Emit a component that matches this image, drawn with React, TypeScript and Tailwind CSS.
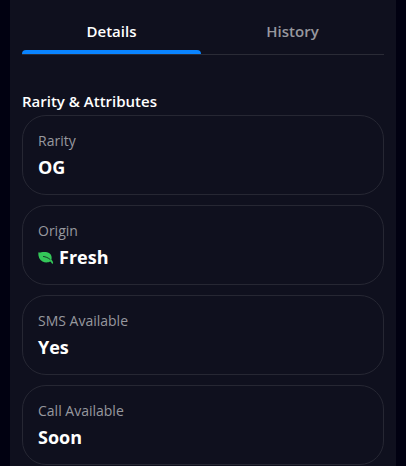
import React, { useState } from 'react';
import clsx from 'clsx';

type Attribute = {
  label: string;
  value: string;
  icon?: React.ReactNode;
}

const LeafIcon = () => (
  <svg viewBox="0 0 16 16" className="size-4 shrink-0" aria-hidden="true">
    <path
      d="M.3 3.200C.8 3.600 2 3.500 3.400 3.200c2.600-.5 6-.5 8.300 1.300 2 1.600 2.300 4.100 1.700 6.200.8.700 1.500 1.700 1.700 3 .1 1-1 1.300-1.400.5-.3-.8-.8-1.200-1.400-1.700-1.700 1-5.200 1.400-7.800 0C1.500 10.900 0 7.500.3 3.200Z"
      fill="#34c759"
    />
    <path d="M5.500 7.500c2.200.3 4.300 1.100 6.500 2.800" fill="none" stroke="#0f101e" strokeWidth="0.8" strokeLinecap="round" />
  </svg>
);

const tabs = ['Details', 'History'];

const attributes: Attribute[] = [
  { label: 'Rarity', value: 'OG' },
  { label: 'Origin', value: 'Fresh', icon: <LeafIcon /> },
  { label: 'SMS Available', value: 'Yes' },
  { label: 'Call Available', value: 'Soon' },
];

const AttributeCard: React.FC<Attribute> = ({ label, value, icon }) => (
  <div className="rounded-3xl border border-[#262733] p-[15px]">
    <dt className="text-sm leading-5 text-[#97989e]">{label}</dt>
    <dd className="mt-1 flex items-center gap-[5px] text-lg leading-6 font-bold text-white">
      {icon}
      {value}
    </dd>
  </div>
);

export default function App() {
  const [activeTab, setActiveTab] = useState('Details');

  return (
    <div className="min-h-screen bg-[#010111] px-[10px] font-['Open_Sans','Noto_Sans',sans-serif]">
      <main className="min-h-screen bg-[#0f101e] px-3">
        <div role="tablist" className="flex border-b border-[#2a2b36] pt-3">
          {tabs.map((tab) => (
            <button
              key={tab}
              type="button"
              role="tab"
              aria-selected={activeTab === tab}
              onClick={() => setActiveTab(tab)}
              className={clsx(
                'relative h-[42px] flex-1 pr-0.5 pb-1 text-[15px] leading-5 font-semibold',
                activeTab === tab ? 'text-white' : 'text-[#97989e]'
              )}
            >
              {tab}
              {activeTab === tab && (
                <span className="absolute right-0.5 bottom-0 left-0 h-1 rounded-t-sm bg-[#0a84ff]" />
              )}
            </button>
          ))}
        </div>

        {/* Attributes list */}
        <section className="pt-[34px]">
          <h2 className="mb-0.5 text-[15px] leading-6 font-semibold text-white">Rarity &amp; Attributes</h2>
          <dl className="flex flex-col gap-[10px]">
            {attributes.map((item) => (
              <AttributeCard key={item.label} {...item} />
            ))}
          </dl>
        </section>
      </main>
    </div>
  );
}
